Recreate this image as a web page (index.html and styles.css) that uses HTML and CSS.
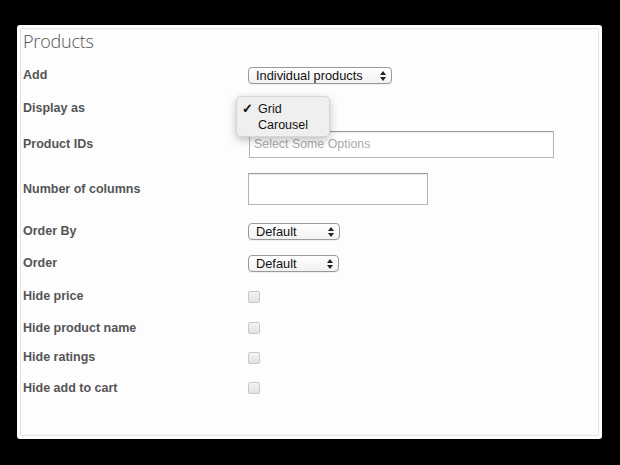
FILE: index.html
```html
<!DOCTYPE html>
<html>
<head>
<meta charset="utf-8">
<link rel="stylesheet" href="styles.css">
</head>
<body>
<div class="panel">
  <div class="inner">
    <h1 class="title">Products</h1>
    <div class="form">
      <div class="label">Add</div>
      <div class="ctl"><div class="select w-add">Individual products<svg class="arr" width="6" height="10" viewBox="0 0 6 10"><path d="M0 4 L3 0 L6 4Z M0 6 L3 10 L6 6Z" fill="#222"/></svg></div></div>

      <div class="label">Display as</div>
      <div class="ctl menu-anchor">
        <div class="menu">
          <div class="opt"><span class="check">✓</span>Grid</div>
          <div class="opt">Carousel</div>
        </div>
      </div>

      <div class="label">Product IDs</div>
      <div class="ctl"><div class="input w-ids"><span class="ph">Select Some Options</span></div></div>

      <div class="label">Number of columns</div>
      <div class="ctl"><div class="input w-num"></div></div>

      <div class="label">Order By</div>
      <div class="ctl"><div class="select w-def">Default<svg class="arr" width="6" height="10" viewBox="0 0 6 10"><path d="M0 4 L3 0 L6 4Z M0 6 L3 10 L6 6Z" fill="#222"/></svg></div></div>

      <div class="label">Order</div>
      <div class="ctl"><div class="select w-def2">Default<svg class="arr" width="6" height="10" viewBox="0 0 6 10"><path d="M0 4 L3 0 L6 4Z M0 6 L3 10 L6 6Z" fill="#222"/></svg></div></div>

      <div class="label">Hide price</div>
      <div class="ctl"><span class="cb"></span></div>

      <div class="label">Hide product name</div>
      <div class="ctl"><span class="cb"></span></div>

      <div class="label">Hide ratings</div>
      <div class="ctl"><span class="cb"></span></div>

      <div class="label">Hide add to cart</div>
      <div class="ctl"><span class="cb"></span></div>
    </div>
  </div>
</div>
</body>
</html>
```
FILE: styles.css
```css
html, body {
  margin: 0;
  padding: 0;
  background: #000;
  width: 620px;
  height: 465px;
  overflow: hidden;
  font-family: "Liberation Sans", Arial, sans-serif;
}
.panel {
  margin: 25px 0 0 17px;
  width: 585px;
  height: 414px;
  box-sizing: border-box;
  background: #fdfdfd;
  border-radius: 3px;
  padding: 3px;
}
.inner {
  height: 100%;
  box-sizing: border-box;
  border: 1px solid #e4e4e4;
  border-radius: 2px;
  padding: 0 0 0 2px;
}
.title {
  margin: 0;
  padding-top: 1px;
  height: 29px;
  font-family: "Open Sans", sans-serif;
  font-weight: 300;
  font-size: 18px;
  line-height: 22px;
  color: #555;
  letter-spacing: -0.2px;
}
.form {
  display: grid;
  grid-template-columns: 225px 1fr;
  grid-template-rows: 32px 34px 38px 52px 32px 32px 34px 29px 30px 31px;
  align-items: center;
}
.label {
  font-size: 12.5px;
  font-weight: bold;
  color: #555;
}
.ctl {
  display: flex;
  align-items: center;
}
.select {
  position: relative;
  box-sizing: border-box;
  height: 17px;
  border: 1px solid #9a9a9a;
  border-radius: 4px;
  background: linear-gradient(#fff, #f1f1f1);
  font-size: 12.8px;
  line-height: 15px;
  color: #111;
  padding-left: 7px;
  box-shadow: 0 1px 0 rgba(0,0,0,0.05);
}
.arr {
  position: absolute;
  right: 5px;
  top: 3px;
}
.w-add { width: 144px; }
.w-def { width: 92px; }
.w-def2 { width: 91px; }
.input {
  box-sizing: border-box;
  border: 1px solid #b5b5b5;
  border-top-color: #999;
  background: #fff;
  box-shadow: inset 0 1px 1px rgba(0,0,0,0.08);
}
.w-ids {
  width: 305px;
  height: 27px;
  margin-left: 1px;
  padding-left: 4px;
  display: flex;
  align-items: center;
}
.ph {
  font-size: 12.4px;
  color: #a9a9a9;
}
.w-num {
  width: 180px;
  height: 32px;
}
.cb {
  display: block;
  width: 10px;
  height: 10px;
  border: 1px solid #c8c8c8;
  border-radius: 2px;
  background: linear-gradient(#f4f4f4, #e2e2e2);
  margin-top: 1px;
}
.menu-anchor {
  position: relative;
  height: 100%;
}
.menu {
  position: absolute;
  left: -12px;
  top: 5px;
  width: 94px;
  height: 41px;
  box-sizing: border-box;
  background: #efefef;
  border: 1px solid #d6d6d6;
  border-radius: 5px;
  box-shadow: 0 3px 8px rgba(0,0,0,0.25);
  padding-top: 4px;
}
.opt {
  position: relative;
  font-size: 12.5px;
  line-height: 16px;
  color: #111;
  padding-left: 21px;
}
.check {
  position: absolute;
  left: 5px;
  top: 0;
  font-size: 13px;
  font-weight: bold;
}
```
